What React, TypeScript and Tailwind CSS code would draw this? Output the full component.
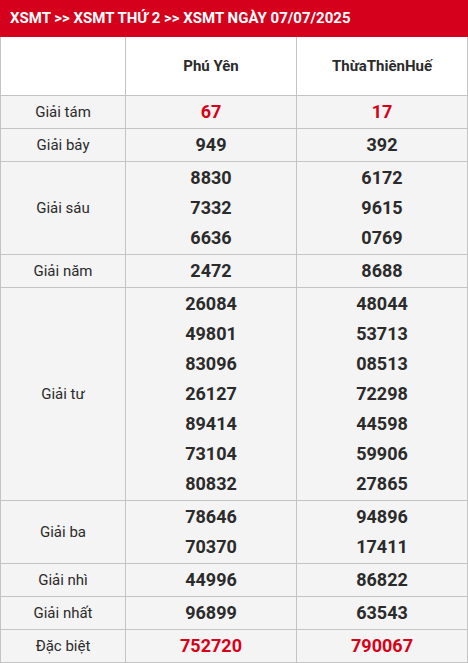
const rows: { label: string; py: string[]; hue: string[]; red?: boolean }[] = [
  { label: 'Giải tám', py: ['67'], hue: ['17'], red: true },
  { label: 'Giải bảy', py: ['949'], hue: ['392'] },
  { label: 'Giải sáu', py: ['8830', '7332', '6636'], hue: ['6172', '9615', '0769'] },
  { label: 'Giải năm', py: ['2472'], hue: ['8688'] },
  {
    label: 'Giải tư',
    py: ['26084', '49801', '83096', '26127', '89414', '73104', '80832'],
    hue: ['48044', '53713', '08513', '72298', '44598', '59906', '27865'],
  },
  { label: 'Giải ba', py: ['78646', '70370'], hue: ['94896', '17411'] },
  { label: 'Giải nhì', py: ['44996'], hue: ['86822'] },
  { label: 'Giải nhất', py: ['96899'], hue: ['63543'] },
  { label: 'Đặc biệt', py: ['752720'], hue: ['790067'], red: true },
];

function Numbers({ items, red }: { items: string[]; red?: boolean }) {
  return (
    <td className="border border-[#c4c4c4] py-px text-center">
      {items.map((n, i) => (
        <div
          key={i}
          className={`h-[30px] leading-[30px] text-[18px] font-bold ${red ? 'text-[#d70018]' : 'text-[#2b2b2b]'}`}
        >
          {n}
        </div>
      ))}
    </td>
  );
}

export default function App() {
  return (
    <div className="w-[468px] bg-white font-['Roboto','Liberation_Sans',sans-serif]">
      <div className="flex h-[37px] items-center bg-[#d5001b] pl-[10px] text-[15px] font-bold text-white">
        XSMT &gt;&gt; XSMT THỨ 2 &gt;&gt; XSMT NGÀY 07/07/2025
      </div>
      <table className="w-full table-fixed border-collapse">
        <colgroup>
          <col className="w-[125px]" />
          <col className="w-[171px]" />
          <col />
        </colgroup>
        <thead>
          <tr className="bg-white">
            <th className="h-[58px] border border-t-0 border-[#c4c4c4]"></th>
            <th className="h-[58px] border border-t-0 border-[#c4c4c4] text-[15px] font-bold text-[#2b2b2b]">Phú Yên</th>
            <th className="h-[58px] border border-t-0 border-[#c4c4c4] text-[15px] font-bold text-[#2b2b2b]">ThừaThiênHuế</th>
          </tr>
        </thead>
        <tbody>
          {rows.map(r => (
            <tr key={r.label} className="bg-[#f4f4f4]">
              <td className="border border-[#c4c4c4] pt-[2px] text-center text-[15px] text-[#2b2b2b]">{r.label}</td>
              <Numbers items={r.py} red={r.red} />
              <Numbers items={r.hue} red={r.red} />
            </tr>
          ))}
        </tbody>
      </table>
    </div>
  );
}
